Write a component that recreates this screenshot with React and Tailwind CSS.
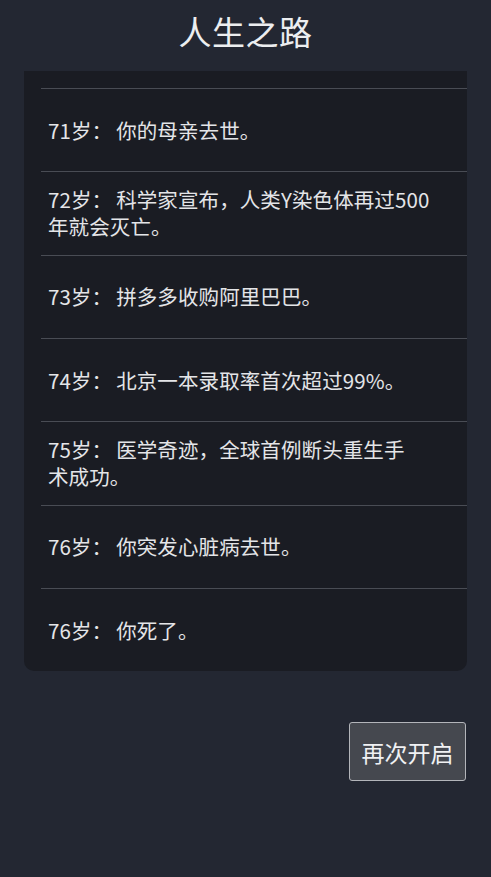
import React from "react";

const rows = [
  { age: "71", lines: ["你的母亲去世。"] },
  { age: "72", lines: ["科学家宣布，人类Y染色体再过500", "年就会灭亡。"] },
  { age: "73", lines: ["拼多多收购阿里巴巴。"] },
  { age: "74", lines: ["北京一本录取率首次超过99%。"] },
  { age: "75", lines: ["医学奇迹，全球首例断头重生手", "术成功。"] },
  { age: "76", lines: ["你突发心脏病去世。"] },
  { age: "76", lines: ["你死了。"] },
];

export default function App() {
  return (
    <div
      className="min-h-[877px] w-full bg-[#232732] text-[#e6e7ea]"
      style={{ fontFamily: '"Noto Sans CJK SC", "Noto Sans", sans-serif' }}
    >
      <div className="h-[71px] flex items-center justify-center pb-[9px]">
        <h1 className="text-[33px] leading-none tracking-[0.5px] text-[#eceef0]">人生之路</h1>
      </div>
      <div className="mx-6 bg-[#1a1c23] rounded-b-[10px] overflow-hidden">
        <div className="h-[17px]" />
        {rows.map((r, i) => (
          <div
            key={i}
            className="ml-[17px] h-[83.33px] border-t border-[#494c54] flex items-center pl-[7px] pr-[10px]"
          >
            <div className="text-[20.5px] leading-[27px] text-[#e4e5e8] tracking-[0.1px] whitespace-nowrap">
              <div>
                {r.age}岁：<span className="ml-[4px]">{r.lines[0]}</span>
              </div>
              {r.lines[1] && <div>{r.lines[1]}</div>}
            </div>
          </div>
        ))}
      </div>
      <div className="flex justify-end mr-[25px] mt-[51px]">
        <button className="w-[117px] h-[59px] bg-[#45484f] border-[1.5px] border-[#b3b5ba] rounded-[3px] text-[23px] text-[#f0f1f3] flex items-center justify-center">
          再次开启
        </button>
      </div>
    </div>
  );
}
